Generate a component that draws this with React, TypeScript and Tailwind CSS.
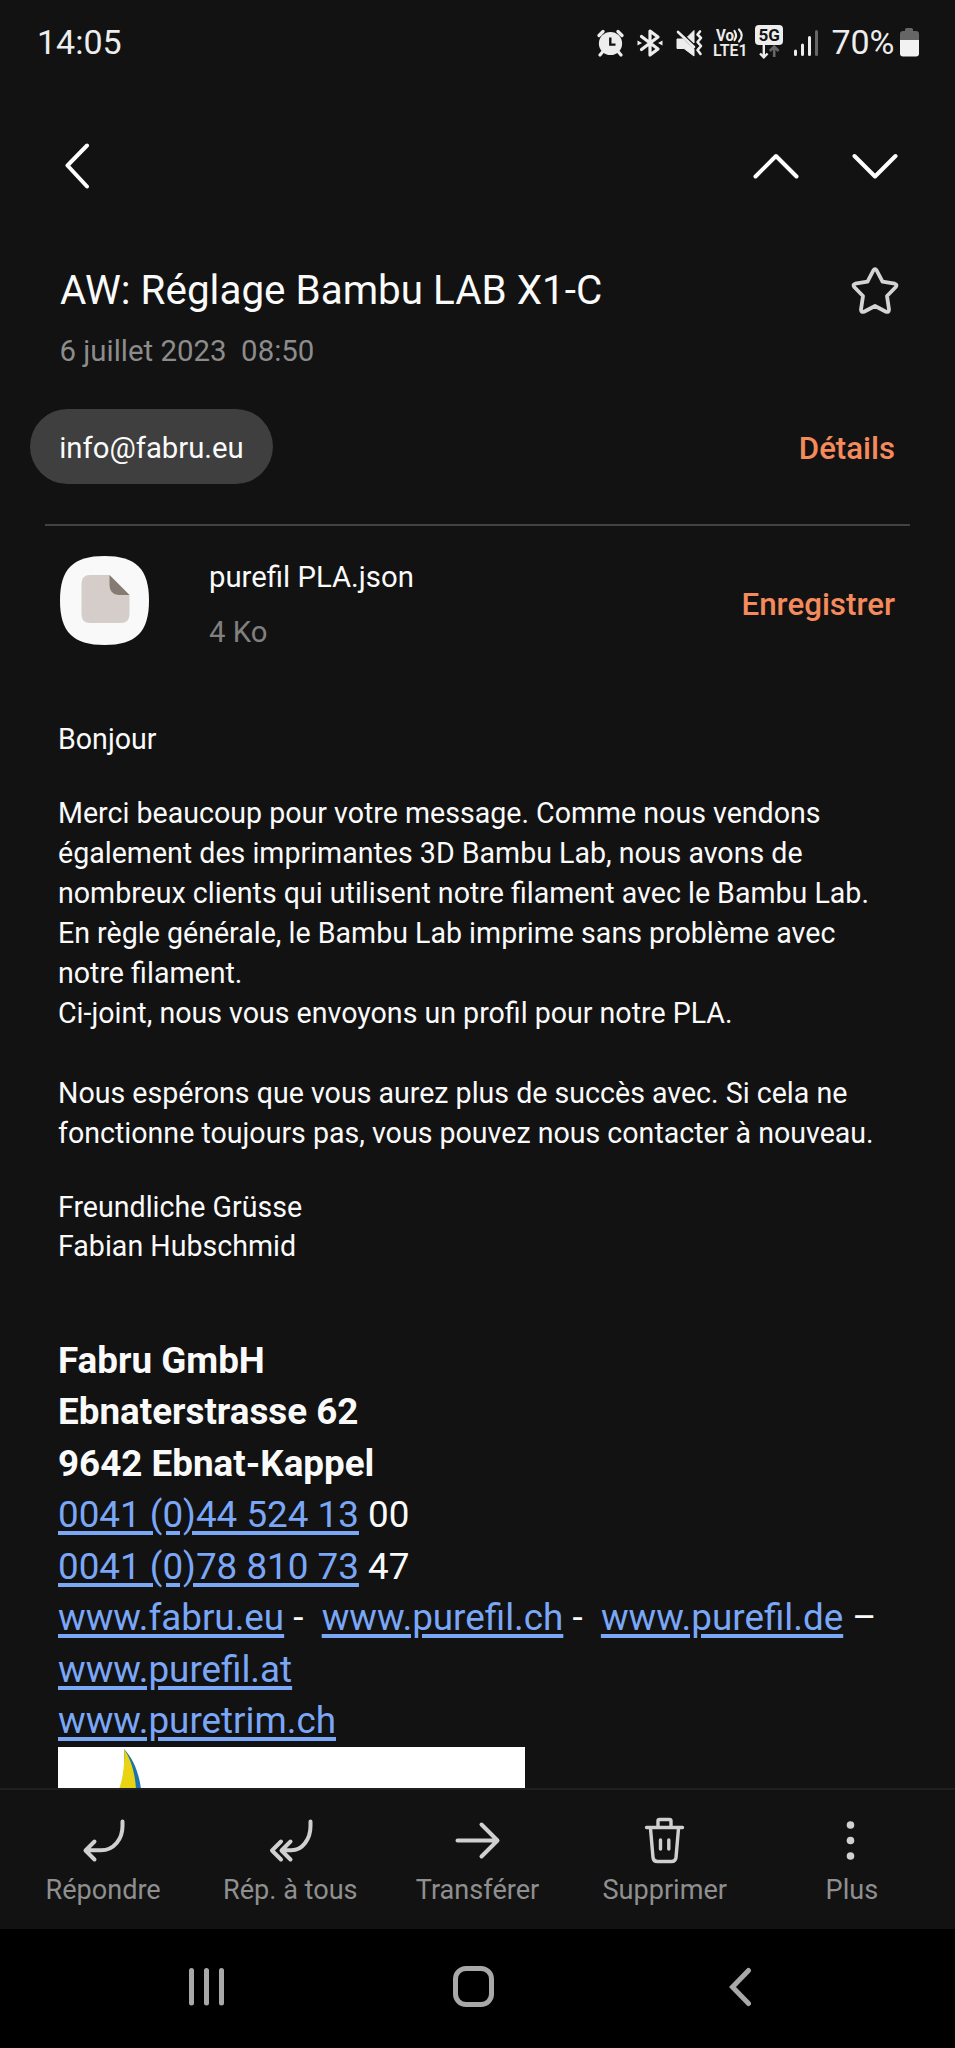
import type { ReactNode } from "react";

const Link = ({ children }: { children: ReactNode }) => (
  <a className="text-[#7ba7f7] underline decoration-[3.600px] underline-offset-[3.500px]">{children}</a>
);

function StatusBar() {
  return (
    <div className="flex h-[84px] items-center pl-[37px] pt-px text-[34px] text-[#ededed]">
      <span>14:05</span>
      <div className="ml-auto flex items-center pr-[36.500px]">
        <svg width="27" height="28" viewBox="0 0 27 28" className="mr-[13px]">
          <circle cx="13.5" cy="14.5" r="11.6" fill="#ededed" />
          <path d="M2 6.5 6 2.5M25 6.5 21 2.5M5.5 23 3 26M21.5 23 24 26" stroke="#ededed" strokeWidth="3.2" strokeLinecap="round" />
          <path d="M13.3 8.5V15.6H18.5" fill="none" stroke="#121212" strokeWidth="2.4" />
        </svg>
        <svg width="26" height="30" viewBox="0 0 26 30" className="mr-[13px]">
          <path d="M4.5 8.5 21 21 13 27V3L21 9 4.5 21.5" fill="none" stroke="#ededed" strokeWidth="3.2" strokeLinejoin="round" strokeLinecap="round" />
          <path d="M.5 12.5 5 15 .5 17.5zM25.5 12.5 21 15l4.500 2.500z" fill="#ededed" />
        </svg>
        <svg width="27" height="28" viewBox="0 0 27 28" className="mr-[10px]">
          <path d="M1 10H7L18 20V27L8 19.500H1zM11.500 8 18 1.500V14z" fill="#ededed" stroke="#ededed" strokeLinejoin="round" />
          <path d="M2 3 18 18" stroke="#ededed" strokeWidth="2.600" strokeLinecap="round" />
          <path d="M24 2.500 21.500 5.500 25 9 21.500 13 25 17 21.500 21 24.500 25" fill="none" stroke="#ededed" strokeWidth="2.600" strokeLinejoin="round" strokeLinecap="round" />
        </svg>
        <svg width="36" height="32" viewBox="0 0 36 32" className="mr-[6px] overflow-visible">
          <text x="3" y="13.500" fill="#ededed" fontSize="16" fontWeight="700" textLength="18" lengthAdjust="spacingAndGlyphs">Vo</text>
          <path d="M21.500 4Q24.500 8.500 21.500 13M26 2.500Q31.500 8.500 26 14.500" fill="none" stroke="#ededed" strokeWidth="2.200" strokeLinecap="round" />
          <text x="0" y="29" fill="#ededed" fontSize="16.500" fontWeight="600" textLength="34.500" lengthAdjust="spacingAndGlyphs">LTE1</text>
        </svg>
        <svg width="28" height="34" viewBox="0 0 28 34" className="-mt-px mr-[11px]">
          <rect width="28" height="20" rx="4" fill="#ededed" />
          <text x="3.500" y="16" fill="#121212" fontSize="17" fontWeight="700" textLength="21.500" lengthAdjust="spacingAndGlyphs">5G</text>
          <path d="M8.800 20V32M5 28.500 8.800 32.300 12.600 28.500" fill="none" stroke="#ededed" strokeWidth="2.400" />
          <path d="M19.200 32V21.500M14.800 26 19.200 21.500 23.600 26" fill="none" stroke="#666" strokeWidth="2.600" />
        </svg>
        <svg width="24" height="26" viewBox="0 0 24 26" className="mr-[13px]">
          <path d="M1.500 21V24.500M8.500 15V24.500M15.500 7.500V24.500" stroke="#ededed" strokeWidth="3" strokeLinecap="round" />
          <path d="M22.500 1.500V24.500" stroke="#666" strokeWidth="3" strokeLinecap="round" />
        </svg>
        <span className="mr-[5px]">70%</span>
        <svg width="19" height="29" viewBox="0 0 19 29">
          <path d="M5 3V1.500Q5 0 6.500 0H11.500Q13 0 13 1.500V3H16Q19 3 19 6V12H0V6Q0 3 3 3z" fill="#666" />
          <path d="M0 12H19V25.500Q19 28.500 16 28.500H3Q0 28.500 0 25.500z" fill="#f2f2f2" />
        </svg>
      </div>
    </div>
  );
}

const chevron = { fill: "none", stroke: "#fff", strokeWidth: 4, strokeLinecap: "round", strokeLinejoin: "round" } as const;
const line = { fill: "none", stroke: "#d0d0d0", strokeWidth: 4, strokeLinecap: "round", strokeLinejoin: "round" } as const;

const actions: { label: string; icon: ReactNode }[] = [
  {
    label: "Répondre",
    icon: <path {...line} d="M43.500 5.500V10C43.500 23 35 34.300 22 34.300H7M15.500 25.500 6.500 34.500 15.500 43.500" />,
  },
  {
    label: "Rép. à tous",
    icon: <path {...line} d="M44.500 5.500V10C44.500 23 36.500 34.300 25.500 34.300H16.500M24.500 25.500 15.500 34.500 24.500 43.500M15 25.500 6 34.500 15 43.500" />,
  },
  { label: "Transférer", icon: <path {...line} d="M4.500 24.500H43.500M28.500 8.500 44.500 24.500 28.500 40.500" /> },
  {
    label: "Supprimer",
    icon: (
      <g {...line} strokeWidth={3.4}>
        <path d="M6.500 11.500H42.500M18 11V5Q18 3.500 19.500 3.500H29.500Q31 3.500 31 5V11M10.500 12.500 13 41.500Q13.400 45.500 17.500 45.500H31.500Q35.500 45.500 36 41.500L38.500 12.500" />
        <path d="M20.500 24V33M28.800 24V33" />
      </g>
    ),
  },
  {
    label: "Plus",
    icon: (
      <g fill="#d0d0d0">
        <circle cx="23.500" cy="9" r="3.800" />
        <circle cx="23.500" cy="24.500" r="3.800" />
        <circle cx="23.500" cy="40" r="3.800" />
      </g>
    ),
  },
];

export default function App() {
  return (
    <div className="flex h-[2048px] w-[955px] flex-col overflow-hidden bg-[#121212] font-[Roboto,sans-serif] text-[#fafafa]">
      <StatusBar />
      <div className="flex h-[164px] shrink-0 items-center pl-[64px] pr-[57px]">
        <svg width="25" height="46" viewBox="0 0 25 46"><path {...chevron} d="M23 2.500 3.500 22.500 23 43.500" /></svg>
        <svg width="46" height="26" viewBox="0 0 46 26" className="ml-auto"><path {...chevron} d="M2.500 23.500 23 3 43.500 23.500" /></svg>
        <svg width="46" height="26" viewBox="0 0 46 26" className="ml-[53px]"><path {...chevron} d="M2.500 3 23 23.500 43.500 3" /></svg>
      </div>

      <div className="mt-3 flex h-[60px] shrink-0 items-center justify-between pl-[60px] pr-[56px]">
        <h1 className="pt-[2px] text-[40.400px] leading-[60px]">AW: Réglage Bambu LAB X1-C</h1>
        <svg width="48" height="48" viewBox="0 0 48 48" className="mt-px">
          <path d="M22.300 3.500Q24 .800 25.700 3.500L31.500 14.700 43.800 16.700Q46.500 17.500 44.800 20L36 29 38 42.500Q37.900 45.600 35 44.700L24 39 13 44.700Q10.100 45.600 10 42.500L12 29 3.200 20Q1.500 17.500 4.200 16.700L16.500 14.700z" fill="none" stroke="#d4d4d4" strokeWidth="3.800" strokeLinejoin="round" />
        </svg>
      </div>
      <div className="mt-[11px] h-10 shrink-0 whitespace-pre pl-[59.500px] text-[29.400px] leading-10 text-[#8c8c8c]">6 juillet 2023  08:50</div>

      <div className="mt-[38px] flex h-[75px] shrink-0 items-center justify-between pl-[30px] pr-[60px]">
        <div className="flex h-[75px] w-[243px] items-center justify-center rounded-full bg-[#3f3f3f] pt-[5px] text-[29.300px]">info@fabru.eu</div>
        <span className="pt-[5px] text-[31.200px] font-medium text-[#f58a5c]">Détails</span>
      </div>
      <div className="mx-[45px] mt-10 h-[2px] shrink-0 bg-[#424242]" />

      <div className="mt-[23px] flex h-[111px] shrink-0 items-center pl-[60px] pr-[60px]">
        <svg width="89" height="89" viewBox="0 0 89 89" className="-mt-[8px]">
          <path d="M44.500 0C76 0 89 13 89 44.500S76 89 44.500 89 0 76 0 44.500 13 0 44.500 0z" fill="#f9f9f9" />
          <path d="M30 19H49.500L69.500 39V58Q69.500 67 60.500 67H30Q21.500 67 21.500 58V28Q21.500 19 30 19z" fill="#d5cdc9" />
          <path d="M49.500 19 69.500 39H59Q49.500 38.500 49.500 29z" fill="#857b73" />
        </svg>
        <div className="ml-[60px] text-[29.300px] leading-[55px]">
          <div>purefil PLA.json</div>
          <div className="text-[#808080]">4 Ko</div>
        </div>
        <span className="ml-auto pt-[2px] text-[31.300px] font-medium text-[#f58a5c]">Enregistrer</span>
      </div>

      <div className="mt-[59px] min-h-0 flex-1 overflow-hidden pl-[58px] text-[28.580px] leading-[40.100px] whitespace-nowrap">
        <p>Bonjour</p>
        <p className="mt-[33.800px]">
          Merci beaucoup pour votre message. Comme nous vendons<br />
          également des imprimantes 3D Bambu Lab, nous avons de<br />
          nombreux clients qui utilisent notre filament avec le Bambu Lab.<br />
          En règle générale, le Bambu Lab imprime sans problème avec<br />
          notre filament.<br />
          Ci-joint, nous vous envoyons un profil pour notre PLA.
        </p>
        <p className="mt-[39.700px]">
          Nous espérons que vous aurez plus de succès avec. Si cela ne<br />
          fonctionne toujours pas, vous pouvez nous contacter à nouveau.
        </p>
        <p className="mt-[34.200px] leading-[39.200px]">
          Freundliche Grüsse<br />
          Fabian Hubschmid
        </p>
        <div className="mt-[69px] text-[36.800px] leading-[51.500px]">
          <div className="font-bold">Fabru GmbH<br />Ebnaterstrasse 62<br />9642 Ebnat-Kappel</div>
          <div><Link>0041 (0)44 524 13</Link> 00</div>
          <div><Link>0041 (0)78 810 73</Link> 47</div>
          <div className="whitespace-pre"><Link>www.fabru.eu</Link> -  <Link>www.purefil.ch</Link> -  <Link>www.purefil.de</Link> –</div>
          <div><Link>www.purefil.at</Link></div>
          <div><Link>www.puretrim.ch</Link></div>
        </div>
        <div className="h-[60px] w-[467px] bg-white pl-[57px] pt-[2px]">
          <svg width="30" height="58" viewBox="0 0 30 58">
            <path d="M9 0C18 9 24 24 26 40V58H10z" fill="#1c73ae" />
            <path d="M9 0C16 10 20 24 21 40V58H1L4 40C8 30 10 14 9 0z" fill="#e8d413" />
          </svg>
        </div>
      </div>

      <div className="flex h-[140.500px] shrink-0 border-t-2 border-[#1f1f1f] pl-[9.500px] pr-[9.500px] pt-[26px]">
        {actions.map((a) => (
          <div key={a.label} className="flex flex-1 flex-col items-center">
            <svg width="49" height="49" viewBox="0 0 49 49">{a.icon}</svg>
            <span className="mt-[7px] text-[27.100px] leading-[36px] text-[#8f8f8f]">{a.label}</span>
          </div>
        ))}
      </div>

      <div className="flex h-[119.500px] shrink-0 items-center bg-black pl-[188px] pb-[3px]">
        <svg width="37" height="40" viewBox="0 0 37 40"><path d="M3.500 3.500V36M18.500 3.500V36M33.500 3.500V36" stroke="#a8a8a8" strokeWidth="5" strokeLinecap="round" /></svg>
        <svg width="41" height="41" viewBox="0 0 41 41" className="ml-[227.500px]"><rect x="2.500" y="2.500" width="36" height="36" rx="10.500" fill="none" stroke="#a8a8a8" strokeWidth="5" /></svg>
        <svg width="24" height="40" viewBox="0 0 24 40" className="ml-[234px]"><path d="M20.500 3.500 4.500 20 20.500 36.500" fill="none" stroke="#a8a8a8" strokeWidth="5" strokeLinecap="round" /></svg>
      </div>
    </div>
  );
}
